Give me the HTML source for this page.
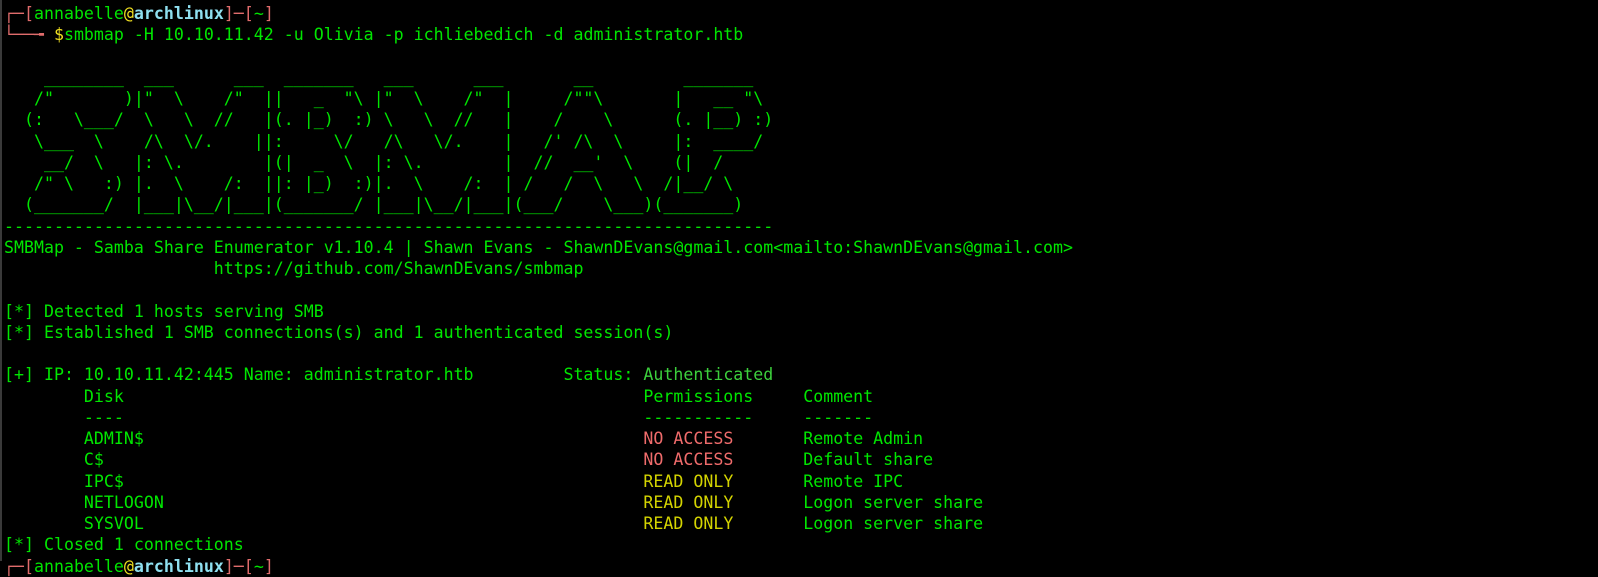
<!DOCTYPE html>
<html><head><meta charset="utf-8"><style>
html,body{margin:0;padding:0;background:#000;width:1598px;height:561px;overflow:hidden}
.b{position:absolute;left:0;top:0;width:2px;height:561px;background:#3a3a3a}
pre{position:absolute;left:4px;top:3px;margin:0;font-family:"DejaVu Sans Mono","Liberation Mono",monospace;font-size:16.6px;line-height:21.25px;color:#00e600;white-space:pre}
.r{color:#e06c6c}.y{color:#f0e020}.c{color:#8fe0f0;font-weight:bold}
.na{color:#ef6b6b}.ro{color:#d4d400}.a{color:#3ccf3c}
</style></head><body><div class="b"></div>
<pre><span class="r">┌─[</span>annabelle<span class="y">@</span><span class="c">archlinux</span><span class="r">]─[</span>~<span class="r">]</span>
<span class="r">└──╼ </span><span class="y">$</span>smbmap -H 10.10.11.42 -u Olivia -p ichliebedich -d administrator.htb

    ________  ___      ___  _______   ___      ___       __         _______
   /"       )|"  \    /"  ||   _  "\ |"  \    /"  |     /""\       |   __ "\
  (:   \___/  \   \  //   |(. |_)  :) \   \  //   |    /    \      (. |__) :)
   \___  \    /\  \/.    ||:     \/   /\   \/.    |   /' /\  \     |:  ____/
    __/  \   |: \.        |(|  _  \  |: \.        |  //  __'  \    (|  /
   /" \   :) |.  \    /:  ||: |_)  :)|.  \    /:  | /   /  \   \  /|__/ \
  (_______/  |___|\__/|___|(_______/ |___|\__/|___|(___/    \___)(_______)
-----------------------------------------------------------------------------
SMBMap - Samba Share Enumerator v1.10.4 | Shawn Evans - ShawnDEvans@gmail.com&lt;mailto:ShawnDEvans@gmail.com&gt;
                     https://github.com/ShawnDEvans/smbmap

[*] Detected 1 hosts serving SMB
[*] Established 1 SMB connections(s) and 1 authenticated session(s)

[+] IP: 10.10.11.42:445 Name: administrator.htb         Status: <span class="a">Authenticated</span>
        Disk                                                    Permissions     Comment
        ----                                                    -----------     -------
        ADMIN$                                                  <span class="na">NO ACCESS</span>       Remote Admin
        C$                                                      <span class="na">NO ACCESS</span>       Default share
        IPC$                                                    <span class="ro">READ ONLY</span>       Remote IPC
        NETLOGON                                                <span class="ro">READ ONLY</span>       Logon server share
        SYSVOL                                                  <span class="ro">READ ONLY</span>       Logon server share
[*] Closed 1 connections
<span class="r">┌─[</span>annabelle<span class="y">@</span><span class="c">archlinux</span><span class="r">]─[</span>~<span class="r">]</span></pre>
</body></html>
